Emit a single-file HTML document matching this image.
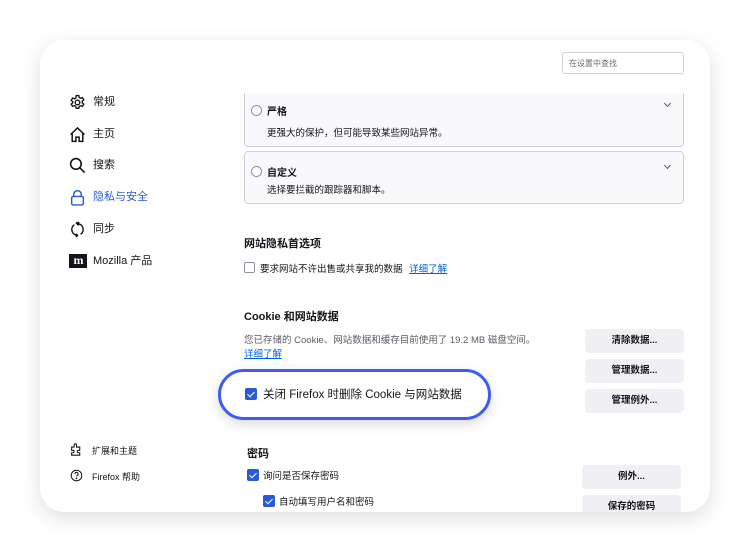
<!DOCTYPE html>
<html><head><meta charset="utf-8"><style>
*{margin:0;padding:0;box-sizing:border-box}
body{width:750px;height:552px;background:#fff;font-family:"Liberation Sans","Noto Sans CJK SC",sans-serif;color:#15141a;position:relative;overflow:hidden}
.card{position:absolute;left:40px;top:40px;width:670px;height:472px;border-radius:24px;background:#fff;box-shadow:0 6px 22px rgba(0,0,0,.13);overflow:hidden}
.a{position:absolute;white-space:nowrap}
.nav{font-size:11px;line-height:14px}
.ic{position:absolute;width:17px;height:17px}
.panel{position:absolute;left:204px;width:440px;background:#f9f9fb;border:1px solid #cfcfd8;border-radius:4px}
.radio{position:absolute;width:11px;height:11px;border:1px solid #8f8f9d;border-radius:50%;background:#fff}
.b{font-weight:bold}
.cb{position:absolute;width:11px;height:11px;border:1px solid #8f8f9d;border-radius:2px;background:#fff}
.cbc{position:absolute;width:12px;height:12px;border-radius:2px;background:#2a5bd7}
.cbc:after{content:"";position:absolute;left:4px;top:1.5px;width:3px;height:6px;border:solid #fff;border-width:0 1.6px 1.6px 0;transform:rotate(45deg)}
.btn{position:absolute;width:99px;height:24px;background:#f0f0f4;border-radius:4px;font-size:9.5px;font-weight:bold;text-align:center;line-height:24px}
.lnk{color:#0061e0;text-decoration:underline}
.chev{position:absolute;width:5px;height:5px;border:solid #5b5b66;border-width:0 1px 1px 0;transform:rotate(45deg)}
</style></head><body>
<div class="card">
<svg class="ic" style="left:29px;top:54px" viewBox="0 0 16 16" fill="none" stroke="#15141a" stroke-width="1.3"><path d="M6.8 1.5h2.4l.4 1.8 1.3.7 1.8-.6 1.2 2.1-1.4 1.2v1.6l1.4 1.2-1.2 2.1-1.8-.6-1.3.7-.4 1.8H6.8l-.4-1.8-1.3-.7-1.8.6-1.2-2.1 1.4-1.2V7.2L2.1 6l1.2-2.1 1.8.6 1.3-.7z"/><circle cx="8" cy="8" r="2.2"/></svg>
<div class="a nav" style="left:53px;top:55px">常规</div>
<svg class="ic" style="left:29px;top:86px" viewBox="0 0 16 16" fill="none" stroke="#15141a" stroke-width="1.4"><path d="M1.5 8L8 1.8 14.5 8M3 6.8V14.5h3.5v-4h3v4H13V6.8"/></svg>
<div class="a nav" style="left:53px;top:87px">主页</div>
<svg class="ic" style="left:29px;top:117px" viewBox="0 0 16 16" fill="none" stroke="#15141a" stroke-width="1.5"><circle cx="6.5" cy="6.5" r="5"/><path d="M10.2 10.2l4.5 4.5"/></svg>
<div class="a nav" style="left:53px;top:118px">搜索</div>
<svg class="ic" style="left:29px;top:149px" viewBox="0 0 16 16" fill="none" stroke="#2a5bd7" stroke-width="1.4"><path d="M4.5 7V5a3.5 3.5 0 0 1 7 0v2"/><rect x="2.5" y="7" width="11" height="8" rx="1.5"/></svg>
<div class="a nav" style="left:53px;top:150px;color:#2a5bd7">隐私与安全</div>
<svg class="ic" style="left:29px;top:181px" viewBox="0 0 16 16" fill="none" stroke="#15141a" stroke-width="1.4"><path d="M5 3.5A5.5 5.5 0 0 0 8 13.5M11 12.5A5.5 5.5 0 0 0 8 2.5"/><path d="M8 1L8 4M6.5 2.5L8 1M6.5 12L8 13.5 6.5 15M9.5 1L8 2.5 9.5 4" /></svg>
<div class="a nav" style="left:53px;top:182px">同步</div>
<div class="a" style="left:29px;top:214px;width:18px;height:14px;background:#15141a;color:#fff;font:bold 12px/13px 'Liberation Serif',serif;text-align:center;letter-spacing:-1px">m</div>
<div class="a nav" style="left:53px;top:214px">Mozilla 产品</div>

<svg class="ic" style="left:30px;top:403px;width:13px;height:13px" viewBox="0 0 16 16" fill="none" stroke="#15141a" stroke-width="1.3"><path d="M2 5h3V2.5a1.5 1.5 0 0 1 3 0V5h4v4h-1.5a1.5 1.5 0 0 0 0 3H12v3H2v-3h1.5a1.5 1.5 0 0 0 0-3H2z"/></svg>
<div class="a" style="left:52px;top:404px;font-size:9px">扩展和主题</div>
<svg class="ic" style="left:30px;top:429px;width:13px;height:13px" viewBox="0 0 16 16" fill="none" stroke="#15141a" stroke-width="1.2"><circle cx="8" cy="8" r="6.5"/><path d="M6 6.2a2 2 0 1 1 2.6 1.9c-.5.2-.6.5-.6 1.2"/><circle cx="8" cy="11.5" r=".5" fill="#15141a"/></svg>
<div class="a" style="left:52px;top:430px;font-size:9px">Firefox 帮助</div>

<div class="a" style="left:522px;top:12px;width:122px;height:22px;border:1px solid #cfcfd8;border-radius:3px;font-size:8px;color:#6b6b73;padding:5px 0 0 6px">在设置中查找</div>

<div class="panel" style="top:53px;height:54px;border-top:none;border-radius:0 0 4px 4px">
 <div class="radio" style="left:6px;top:12px"></div>
 <div class="a b" style="left:22px;top:10px;font-size:10px">严格</div>
 <div class="chev" style="left:420px;top:8px"></div>
 <div class="a" style="left:22px;top:32px;font-size:9.5px">更强大的保护，但可能导致某些网站异常。</div>
</div>
<div class="panel" style="top:111px;height:53px">
 <div class="radio" style="left:6px;top:14px"></div>
 <div class="a b" style="left:22px;top:12px;font-size:10px">自定义</div>
 <div class="chev" style="left:420px;top:11px"></div>
 <div class="a" style="left:22px;top:30px;font-size:9.5px">选择要拦截的跟踪器和脚本。</div>
</div>

<div class="a b" style="left:204px;top:195px;font-size:11px">网站隐私首选项</div>
<div class="cb" style="left:204px;top:222px"></div>
<div class="a" style="left:220px;top:221px;font-size:9.5px">要求网站不许出售或共享我的数据 <span class="lnk" style="margin-left:4px">详细了解</span></div>

<div class="a b" style="left:204px;top:268px;font-size:11px">Cookie 和网站数据</div>
<div class="a" style="left:204px;top:292px;font-size:9.5px;color:#5b5b66">您已存储的 Cookie、网站数据和缓存目前使用了 19.2 MB 磁盘空间。</div>
<div class="a lnk" style="left:204px;top:306px;font-size:9.5px">详细了解</div>
<div class="btn" style="left:545px;top:289px">清除数据...</div>
<div class="btn" style="left:545px;top:319px">管理数据...</div>
<div class="btn" style="left:545px;top:349px">管理例外...</div>

<div class="a" style="left:178px;top:329px;width:273px;height:51px;border:3px solid #3d5cf5;border-radius:26px;background:#fff;box-shadow:0 4px 12px rgba(0,0,0,.15)"></div>
<div class="cbc" style="left:205px;top:348px"></div>
<div class="a" style="left:223px;top:346px;font-size:11.5px">关闭 Firefox 时删除 Cookie 与网站数据</div>

<div class="a b" style="left:207px;top:405px;font-size:11px">密码</div>
<div class="cbc" style="left:207px;top:429px"></div>
<div class="a" style="left:223px;top:428px;font-size:9.5px">询问是否保存密码</div>
<div class="cbc" style="left:223px;top:455px"></div>
<div class="a" style="left:239px;top:454px;font-size:9.5px">自动填写用户名和密码</div>
<div class="btn" style="left:542px;top:425px">例外...</div>
<div class="btn" style="left:542px;top:455px">保存的密码</div>
</div>
</body></html>
